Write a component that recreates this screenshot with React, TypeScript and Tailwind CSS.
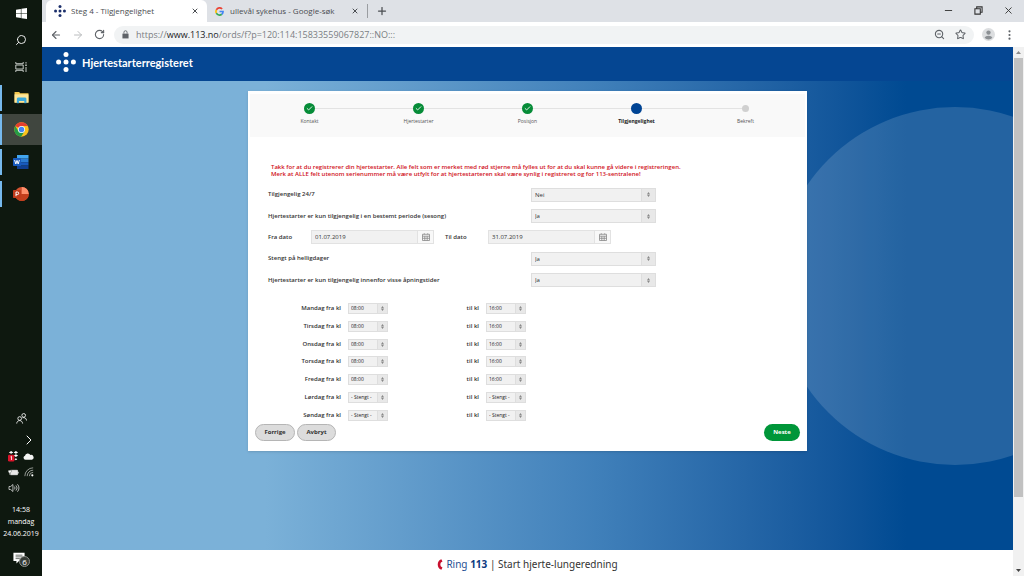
import { useState } from "react";
import {
  ArrowLeft,
  ArrowRight,
  Check,
  ChevronRight,
  Minus,
  Plus,
  RotateCw,
  Search,
  Star,
  X,
  ZoomOut,
} from "lucide-react";

const YES_NO = ["Ja", "Nei"];
const HOURS = ["- Stengt -", "08:00", "16:00"];

const steps = [
  { label: "Kontakt", state: "done" },
  { label: "Hjertestarter", state: "done" },
  { label: "Posisjon", state: "done" },
  { label: "Tilgjengelighet", state: "current" },
  { label: "Bekreft", state: "todo" },
];

const days = [
  { name: "Mandag", from: "08:00", to: "16:00" },
  { name: "Tirsdag", from: "08:00", to: "16:00" },
  { name: "Onsdag", from: "08:00", to: "16:00" },
  { name: "Torsdag", from: "08:00", to: "16:00" },
  { name: "Fredag", from: "08:00", to: "16:00" },
  { name: "Lørdag", from: "- Stengt -", to: "- Stengt -" },
  { name: "Søndag", from: "- Stengt -", to: "- Stengt -" },
];

function DotsLogo({ className }: { className: string }) {
  return (
    <svg viewBox="0 0 20 20" className={className} fill="currentColor">
      <circle cx="10" cy="2.6" r="2.5" />
      <circle cx="2.6" cy="10" r="2.5" />
      <circle cx="10" cy="10" r="2.5" />
      <circle cx="17.4" cy="10" r="2.5" />
      <circle cx="10" cy="17.4" r="2.5" />
    </svg>
  );
}

function WindowsIcon() {
  return (
    <svg viewBox="0 0 12 12" className="size-[11px]" fill="#fff">
      <path d="M0 1.8 5.3 1v4.7H0zM5.9.9 12 0v5.7H5.9zM0 6.3h5.3V11L0 10.2zM5.9 6.3H12V12l-6.1-.9z" />
    </svg>
  );
}

function TaskViewIcon() {
  return (
    <svg viewBox="0 0 12 12" className="size-3" fill="none" stroke="#d5d9d5" strokeWidth="0.9">
      <path d="M.8 1v1.7h7.4V1M.8 11V9.3h7.4V11M.8 4h7.4v4H.8zM11 1v1.6M11 6v5" />
      <path d="M10.3 4.3h1.4" strokeWidth="1.5" />
    </svg>
  );
}

function FolderIcon() {
  return (
    <svg viewBox="0 0 16 14" className="h-[13px] w-[15px]">
      <path d="M.5 1h5l1 1.3h9v10.2H.5z" fill="#f3c74f" />
      <path d="M.5 3.6h15v9H.5z" fill="#fde69a" />
      <path d="M3 8.2 4 7h8.3l1 1.2v5H11v-2.5H5.3v2.5H3z" fill="#3ba9dc" />
    </svg>
  );
}

function ChromeIcon() {
  return (
    <svg viewBox="0 0 24 24" className="size-[15px]">
      <circle cx="12" cy="12" r="11.5" fill="#fbc11b" />
      <path d="M12 12 2 6.3A11.5 11.5 0 0 1 22 6.3H12z" fill="#e33e2f" />
      <path d="M2 6.3A11.5 11.5 0 0 0 11.3 23.5L17 14.9 12 12 7 14.8z" fill="#259b46" />
      <circle cx="12" cy="12" r="5.6" fill="#fff" />
      <circle cx="12" cy="12" r="4.4" fill="#4384f3" />
    </svg>
  );
}

function WordIcon() {
  return (
    <svg viewBox="0 0 16 16" className="size-4">
      <path d="M4 1h11.5v3.6H4z" fill="#42a5ee" />
      <path d="M4 4.6h11.5v3.6H4z" fill="#2b7cd3" />
      <path d="M4 8.2h11.5v3.4H4z" fill="#185abd" />
      <path d="M4 11.6h11.5V15H4z" fill="#103f91" />
      <rect x="0" y="4" width="8" height="8" rx=".7" fill="#185abd" />
      <path d="m1.6 6 1.2 4L4 6.4 5.2 10l1.2-4" fill="none" stroke="#fff" strokeWidth="1" />
    </svg>
  );
}

function PowerPointIcon() {
  return (
    <svg viewBox="0 0 16 16" className="size-4">
      <circle cx="8.8" cy="8" r="7" fill="#d35230" />
      <path d="M8.8 1a7 7 0 0 1 7 7h-7z" fill="#ff8f6b" />
      <path d="M1.8 8h14a7 7 0 0 1-14 0z" fill="#c43e1c" />
      <rect x="0" y="4" width="8" height="8" rx=".7" fill="#c13b1b" />
      <path d="M3 10.2V6h1.4a1.3 1.3 0 0 1 0 2.6H3" fill="none" stroke="#fff" strokeWidth="1" />
    </svg>
  );
}

function PeopleIcon() {
  return (
    <svg viewBox="0 0 12 12" className="size-[11px]" fill="none" stroke="#fff" strokeWidth="0.9">
      <circle cx="4" cy="6" r="2" />
      <path d="M.8 11.5C.9 9.5 2.2 8.3 4 8.3s3 1.2 3.2 3.2" />
      <circle cx="8.4" cy="2.6" r="2" />
      <path d="M7 5.2c2.4-.7 4.3.5 4.5 3" />
    </svg>
  );
}

function DropboxIcon() {
  return (
    <svg viewBox="0 0 12 12" className="size-[11px]">
      <path
        d="m3.4 0 2.4 1.5L3.4 3 1 1.5zM8.6 0 11 1.5 8.6 3 6.2 1.5zM8.6 3.5 11 5 8.6 6.5 6.2 5zM8.6 8l1.6 1-1.6 1L7 9z"
        fill="#fff"
      />
      <rect x="0" y="4" width="7" height="7.5" rx="1.5" fill="#d8152b" />
      <path d="M2.8 6.4 3.8 5.8v4" fill="none" stroke="#fff" strokeWidth=".9" />
    </svg>
  );
}

function CloudIcon() {
  return (
    <svg viewBox="0 0 12 8" className="h-[7px] w-[11px]" fill="#f4f4f4">
      <path d="M2.5 7.7A2.3 2.3 0 0 1 2 3.2 3.3 3.3 0 0 1 8.2 2.3 2.7 2.7 0 0 1 9.8 7.7z" />
    </svg>
  );
}

function BatteryIcon() {
  return (
    <svg viewBox="0 0 12 8" className="h-[7px] w-[11px]">
      <path d="M2.5 1.5h8v5h-8z" fill="#e8e8e8" stroke="#fff" strokeWidth=".8" />
      <path d="M10.8 3h1v2h-1z" fill="#fff" />
      <path d="M0 1.3h3.5v2L2.3 4.5v2H1.2v-2L0 3.3z" fill="#fff" stroke="#0e180f" strokeWidth=".4" />
    </svg>
  );
}

function WifiIcon() {
  return (
    <svg viewBox="0 0 12 12" className="size-[10px]" fill="none" stroke="#bfc3bf" strokeWidth="0.9">
      <path d="M1 11A10 10 0 0 1 11 1M3.8 11A7.2 7.2 0 0 1 11 3.8M6.4 11A4.6 4.6 0 0 1 11 6.4" />
      <circle cx="10" cy="10" r="1.3" fill="#fff" stroke="none" />
    </svg>
  );
}

function VolumeIcon() {
  return (
    <svg viewBox="0 0 14 12" className="h-[10px] w-3" fill="none" stroke="#e6e6e6" strokeWidth="0.9">
      <path d="M1 4.2h2L5.7 1.8v8.4L3 7.8H1zM7.5 4.3a2.5 2.5 0 0 1 0 3.4M9.3 2.9a4.5 4.5 0 0 1 0 6.2M11.1 1.5a6.4 6.4 0 0 1 0 9" />
    </svg>
  );
}

function GoogleIcon() {
  return (
    <svg viewBox="0 0 24 24" className="size-[9px]" fill="none" strokeWidth="4.5">
      <path d="M19 5.3A9.5 9.5 0 0 0 3.7 7.5" stroke="#ea4335" />
      <path d="M3.7 7.5a9.5 9.5 0 0 0 0 9" stroke="#fbbc05" />
      <path d="M3.7 16.5A9.5 9.5 0 0 0 18 19.3" stroke="#34a853" />
      <path d="M18 19.3a9.5 9.5 0 0 0 3.5-7.3H12" stroke="#4285f4" />
    </svg>
  );
}

function CalendarIcon() {
  return (
    <svg viewBox="0 0 8 8" className="size-2" fill="none" stroke="#888" strokeWidth=".8">
      <path d="M.5 1.3h7v6.2h-7zM.5 3.2h7M.5 5.3h7M2.8 3.2v4.3M5.2 3.2v4.3M2.3.3v1M5.7.3v1" />
    </svg>
  );
}

function SortArrows() {
  return (
    <svg viewBox="0 0 6 10" className="h-[5px] w-[3px]" fill="#888">
      <path d="M3 0 6 4.4H0zM3 10 0 5.6h6z" />
    </svg>
  );
}

function TaskbarApp({
  label,
  active,
  children,
}: {
  label: string;
  active?: boolean;
  children: React.ReactNode;
}) {
  return (
    <div className={`flex h-[31px] items-center ${active ? "bg-[#40463f]" : ""}`}>
      <span className={`w-[2px] bg-[#76b9ed] ${active ? "h-full" : "h-[26px]"}`} />
      <button aria-label={label} className="flex flex-1 justify-center pr-[2px]">
        {children}
      </button>
    </div>
  );
}

function Taskbar() {
  return (
    <aside className="flex w-[42px] shrink-0 flex-col bg-[#0e180f] text-white">
      <div className="flex flex-col">
        <button aria-label="Start" className="flex h-[27px] items-center justify-center">
          <WindowsIcon />
        </button>
        <button aria-label="Søk" className="flex h-[26px] items-center justify-center">
          <Search className="size-3 -scale-x-100" strokeWidth={1.8} />
        </button>
        <button aria-label="Oppgavevisning" className="flex h-[27px] items-center justify-center">
          <TaskViewIcon />
        </button>
      </div>
      <div className="mt-[2px] flex flex-col gap-px">
        <TaskbarApp label="Filutforsker">
          <FolderIcon />
        </TaskbarApp>
        <TaskbarApp label="Chrome" active>
          <ChromeIcon />
        </TaskbarApp>
        <TaskbarApp label="Word">
          <WordIcon />
        </TaskbarApp>
        <TaskbarApp label="PowerPoint">
          <PowerPointIcon />
        </TaskbarApp>
      </div>

      <div className="mt-auto flex flex-col items-center">
        <PeopleIcon />
        <div className="mt-2 grid grid-cols-2 place-items-center gap-x-1 px-2">
          <span />
          <ChevronRight className="size-4" strokeWidth={1.5} />
          <span className="flex h-4 items-center"><DropboxIcon /></span>
          <CloudIcon />
          <span className="flex h-4 items-center"><BatteryIcon /></span>
          <WifiIcon />
          <span className="flex h-4 items-center"><VolumeIcon /></span>
        </div>
        <div className="mt-2 text-center text-[7px] leading-3">
          <div>14:58</div>
          <div>mandag</div>
          <div>24.06.2019</div>
        </div>
        <button aria-label="Varsler" className="relative mt-3 mb-[10px] flex h-[14px] w-4 items-start">
          <svg viewBox="0 0 14 13" className="h-3 w-3">
            <path d="M.5.5h13v9.5H7L4 12.8V10H.5z" fill="#fff" />
            <path d="M3 3.2h8M3 5.2h8M3 7.2h5" stroke="#0e180f" strokeWidth=".7" />
          </svg>
          <span className="absolute top-1 left-1.5 flex size-[11px] items-center justify-center rounded-full border border-[#8b8f8b] bg-[#353b35] text-[8px] leading-none">
            6
          </span>
        </button>
      </div>
    </aside>
  );
}

function TabStrip() {
  return (
    <div className="flex h-[22px] items-stretch bg-[#dee1e6] pl-1 text-[#4a4d51]">
      <div className="flex w-[161px] items-center rounded-t-md bg-white px-2">
        <DotsLogo className="size-3 text-[#1b2f6b]" />
        <span className="ml-[5px] flex-1 text-[8px]">Steg 4 - Tilgjengelighet</span>
        <button aria-label="Lukk fane"><X className="size-2" strokeWidth={3} /></button>
      </div>
      <div className="flex w-[160px] items-center px-2">
        <GoogleIcon />
        <span className="ml-1.5 flex-1 text-[8px]">ullevål sykehus - Google-søk</span>
        <button aria-label="Lukk fane"><X className="size-2" strokeWidth={3} /></button>
      </div>
      <div className="my-1 flex items-center border-l border-[#9a9da1] pl-2">
        <button aria-label="Ny fane"><Plus className="size-3" strokeWidth={2.5} /></button>
      </div>
      <div className="ml-auto flex items-center gap-5 pr-[10px] pb-[2px] text-[#333]">
        <button aria-label="Minimer"><Minus className="size-[11px]" strokeWidth={2} /></button>
        <button aria-label="Gjenopprett">
          <svg viewBox="0 0 10 10" className="size-[9px]" fill="none" stroke="currentColor" strokeWidth="1.2">
            <path d="M1 3h6v6H1zM3 3V1h6v6H7" />
          </svg>
        </button>
        <button aria-label="Lukk"><X className="size-[11px]" strokeWidth={2} /></button>
      </div>
    </div>
  );
}

function Toolbar() {
  return (
    <div className="flex h-[25px] items-center bg-white pl-2 text-[#5f6368]">
      <button aria-label="Tilbake"><ArrowLeft className="size-3" strokeWidth={2.2} /></button>
      <button aria-label="Frem" className="ml-[10px] text-[#babcbe]"><ArrowRight className="size-3" strokeWidth={2} /></button>
      <button aria-label="Last inn på nytt" className="ml-[10px]"><RotateCw className="size-[11px]" strokeWidth={2.4} /></button>
      <div className="ml-[9px] flex h-[18px] flex-1 items-center rounded-full bg-[#f1f3f4] px-2">
        <svg viewBox="0 0 8 10" className="h-[9px] w-[7px]">
          <path d="M.5 4h7v5.5h-7z" fill="#5f6368" />
          <path d="M2.2 4V2.5a1.8 1.8 0 0 1 3.6 0V4" fill="none" stroke="#5f6368" />
        </svg>
        <span className="ml-[7px] flex-1 text-[9px] text-[#7a7e83]">
          https://<span className="text-[#202124]">www.113.no</span>/ords/f?p=120:114:15833559067827::NO:::
        </span>
        <button aria-label="Zoom"><ZoomOut className="size-[11px]" strokeWidth={2.4} /></button>
        <button aria-label="Bokmerke" className="ml-[10px]"><Star className="size-[11px]" strokeWidth={2.2} /></button>
      </div>
      <button aria-label="Profil" className="ml-2">
        <svg viewBox="0 0 12 12" className="size-[13px]">
          <circle cx="6" cy="6" r="6" fill="#dcdee0" />
          <circle cx="6" cy="4.2" r="2" fill="#8c9094" />
          <path d="M2.4 9a3.7 2.5 0 0 1 7.2 0 4.7 4.7 0 0 1-7.2 0z" fill="#8c9094" />
        </svg>
      </button>
      <button aria-label="Meny" className="mr-[13px] ml-[13px]">
        <svg viewBox="0 0 3 11" className="h-[10px] w-[3px]" fill="#5f6368">
          <circle cx="1.5" cy="1.5" r="1.2" />
          <circle cx="1.5" cy="5.5" r="1.2" />
          <circle cx="1.5" cy="9.5" r="1.2" />
        </svg>
      </button>
    </div>
  );
}

function Stepper() {
  return (
    <ol className="mx-[2px] flex h-[43px] bg-[#f9f9f9] px-[5px] pt-[9px]">
      {steps.map((step, i) => (
        <li key={step.label} className="flex flex-1 flex-col items-center">
          <div className="flex w-full items-center">
            <span className={`h-px flex-1 ${i > 0 ? "bg-[#e3e3e3]" : ""}`} />
            {step.state === "done" && (
              <span className="flex size-[11px] items-center justify-center rounded-full bg-[#068c38] text-white">
                <Check className="size-[7px]" strokeWidth={3} />
              </span>
            )}
            {step.state === "current" && <span className="size-[11px] rounded-full bg-[#004494]" />}
            {step.state === "todo" && <span className="my-[2px] size-[7px] rounded-full bg-[#d0d0d0]" />}
            <span className={`h-px flex-1 ${i < steps.length - 1 ? "bg-[#e3e3e3]" : ""}`} />
          </div>
          <span
            className={`mt-1 text-[5px] leading-[7px] ${
              step.state === "current" ? "font-bold text-[#222]" : "font-normal text-[#555]"
            }`}
          >
            {step.label}
          </span>
        </li>
      ))}
    </ol>
  );
}

function SelectBox({
  id,
  options,
  initial,
  small,
}: {
  id: string;
  options: string[];
  initial: string;
  small?: boolean;
}) {
  const [value, setValue] = useState(initial);

  return (
    <div
      className={`flex border border-[#dedede] bg-[#f1f1f1] font-normal ${
        small ? "h-[11px] w-[40px]" : "h-[14px] w-[125px]"
      }`}
    >
      <select
        id={id}
        value={value}
        onChange={(e) => setValue(e.target.value)}
        className={`min-w-0 flex-1 appearance-none outline-none ${
          small ? "pl-[2px] text-[5px] leading-[9px] text-[#222]" : "pl-[3px] text-[6px] leading-3 text-[#333]"
        }`}
      >
        {options.map((option) => (
          <option key={option}>{option}</option>
        ))}
      </select>
      <span
        className={`flex items-center justify-center border-l border-[#dedede] bg-[#e8e8e8] ${
          small ? "w-[10px]" : "w-[14px]"
        }`}
      >
        <SortArrows />
      </span>
    </div>
  );
}

function DateField({ id, initial }: { id: string; initial: string }) {
  const [value, setValue] = useState(initial);

  return (
    <div className="flex h-[14px] w-[123px] border border-[#e2e2e2] bg-[#f1f1f1] font-normal">
      <input
        id={id}
        type="text"
        value={value}
        onChange={(e) => setValue(e.target.value)}
        className="min-w-0 flex-1 pl-[3px] text-[6px] leading-3 text-[#333] outline-none"
      />
      <button
        type="button"
        aria-label="Velg dato"
        className="flex w-4 items-center justify-center border-l border-[#e2e2e2] bg-[#f8f8f8]"
      >
        <CalendarIcon />
      </button>
    </div>
  );
}

function SelectRow({ id, label, initial }: { id: string; label: string; initial: string }) {
  return (
    <div className="flex items-center">
      <label htmlFor={id} className="w-[263px]">{label}</label>
      <SelectBox id={id} options={YES_NO} initial={initial} />
    </div>
  );
}

function AvailabilityForm() {
  return (
    <form
      className="mx-auto w-[559px] max-w-full bg-white pt-[3px] pb-[10px] text-[6px] font-semibold text-[#333] shadow-sm"
      onSubmit={(e) => e.preventDefault()}
    >
      <Stepper />
      <p className="mt-[27px] pl-[23px] leading-[7px] text-[#d0111b]">
        Takk for at du registrerer din hjertestarter. Alle felt som er merket med rød stjerne må fylles ut for at du skal kunne gå videre i registreringen.
        <br />
        Merk at ALLE felt utenom serienummer må være utfylt for at hjertestarteren skal være synlig i registreret og for 113-sentralene!
      </p>

      <div className="mt-[6px] grid h-[107px] auto-rows-fr pl-5">
        <SelectRow id="always" label="Tilgjengelig 24/7" initial="Nei" />
        <SelectRow id="season" label="Hjertestarter er kun tilgjengelig i en bestemt periode (sesong)" initial="Ja" />
        <div className="flex items-center">
          <label htmlFor="from-date" className="w-[43px]">Fra dato</label>
          <DateField id="from-date" initial="01.07.2019" />
          <label htmlFor="to-date" className="ml-[11px] w-[43px]">Til dato</label>
          <DateField id="to-date" initial="31.07.2019" />
        </div>
        <SelectRow id="holidays" label="Stengt på helligdager" initial="Ja" />
        <SelectRow id="hours" label="Hjertestarter er kun tilgjengelig innenfor visse åpningstider" initial="Ja" />
      </div>

      <div className="mt-[9px] grid h-[124px] auto-rows-fr">
        {days.map((day) => (
          <div key={day.name} className="flex items-center">
            <label htmlFor={`${day.name}-from`} className="w-[93px] text-right">
              {day.name} fra kl
            </label>
            <div className="ml-[7px]">
              <SelectBox id={`${day.name}-from`} options={HOURS} initial={day.from} small />
            </div>
            <label htmlFor={`${day.name}-to`} className="ml-[60px] w-[31px] text-right">
              til kl
            </label>
            <div className="ml-[7px]">
              <SelectBox id={`${day.name}-to`} options={HOURS} initial={day.to} small />
            </div>
          </div>
        ))}
      </div>

      <div className="flex gap-[2px] px-[7px] font-bold">
        <button type="button" className="h-[17px] w-[40px] rounded-full border border-[#b5b5b5] bg-[#dcdcdc]">
          Forrige
        </button>
        <button type="button" className="h-[17px] w-[39px] rounded-full border border-[#b5b5b5] bg-[#dcdcdc]">
          Avbryt
        </button>
        <button type="submit" className="ml-auto h-[17px] w-[36px] rounded-full bg-[#009639] text-white">
          Neste
        </button>
      </div>
    </form>
  );
}

function ScrollBar() {
  return (
    <div className="flex w-[11px] shrink-0 flex-col items-center bg-[#f1f1f1]">
      <svg viewBox="0 0 11 11" className="size-[11px] shrink-0" fill="#8b8b8b">
        <path d="M5.5 4 8 7H3z" />
      </svg>
      <div className="w-[9px] flex-[13] bg-[#c1c1c1]" />
      <div className="flex-2" />
      <svg viewBox="0 0 11 11" className="size-[11px] shrink-0" fill="#444">
        <path d="M5.5 7 8 4H3z" />
      </svg>
    </div>
  );
}

export default function App() {
  return (
    <div className="flex h-screen overflow-hidden font-['Open_Sans','Noto_Sans',sans-serif]">
      <Taskbar />
      <div className="flex min-w-0 flex-1 flex-col">
        <TabStrip />
        <Toolbar />
        <div className="flex min-h-0 flex-1">
          <div className="flex min-w-0 flex-1 flex-col">
            <header className="flex h-[34px] shrink-0 items-center bg-[#054692] px-[14px] pb-1 text-white">
              <DotsLogo className="size-5" />
              <h1 className="ml-[6px] font-['Lato','Open_Sans',sans-serif] text-[11px] leading-none font-bold">
                Hjertestarterregisteret
              </h1>
            </header>
            <main className="relative flex-1 overflow-hidden bg-linear-to-r from-[#7bb1d8] from-23% via-[#4080ba] via-57% to-[#004a92] to-89% pt-[10px]">
              <div className="absolute top-[26px] -right-[121px] size-[358px] rounded-full bg-white/14" />
              <div className="relative">
                <AvailabilityForm />
              </div>
            </main>
            <footer className="flex h-[26px] shrink-0 items-center justify-center bg-white pt-[2px] font-['Noto_Sans','Open_Sans',sans-serif] text-[10px] leading-none text-[#333]">
              <svg viewBox="0 0 6 12" className="mr-[3px] h-[11px] w-[6px]" fill="#c8102e">
                <path d="M4.5.3C-.8 2-.8 10 4.5 11.7L5.7 9.4 4 8.2C3.2 7 3.2 5 4 3.8L5.7 2.6z" />
              </svg>
              <p>
                <a href="tel:113" className="text-[#1f4f93]">
                  Ring <b className="text-[#0b3a80]">113</b>
                </a>{" "}
                | Start hjerte-lungeredning
              </p>
            </footer>
          </div>
          <ScrollBar />
        </div>
      </div>
    </div>
  );
}
